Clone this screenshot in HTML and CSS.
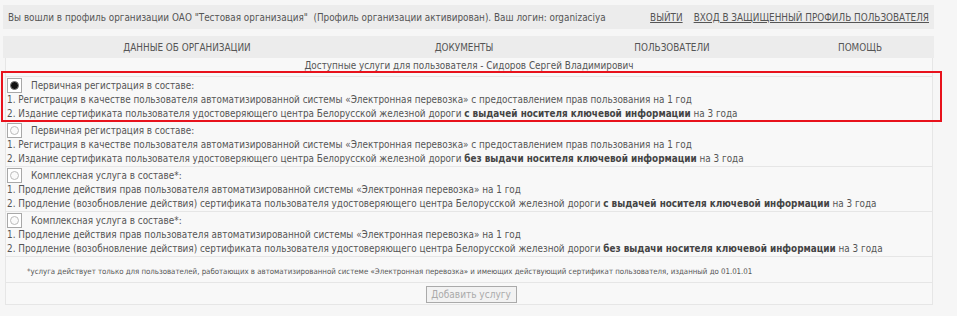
FILE: index.html
```html
<!DOCTYPE html>
<html lang="ru">
<head>
    <meta charset="UTF-8">
    <title>Профиль организации</title>
    <link rel="stylesheet" href="styles.css">
</head>
<body>
    <div class="topbar">
        <span class="login-info">Вы вошли в профиль организации ОАО "Тестовая организация"&nbsp; (Профиль организации активирован). Ваш логин: organizaciya</span>
        <a href="#" class="toplink">ВЫЙТИ</a>
        <a href="#" class="toplink">ВХОД В ЗАЩИЩЕННЫЙ ПРОФИЛЬ ПОЛЬЗОВАТЕЛЯ</a>
    </div>

    <div class="menu">
        <span class="menu-item m1">ДАННЫЕ ОБ ОРГАНИЗАЦИИ</span>
        <span class="menu-item m2">ДОКУМЕНТЫ</span>
        <span class="menu-item m3">ПОЛЬЗОВАТЕЛИ</span>
        <span class="menu-item m4">ПОМОЩЬ</span>
    </div>

    <div class="services">
        <div class="services-title">Доступные услуги для пользователя - Сидоров Сергей Владимирович</div>

        <div class="service">
            <div class="service-head"><span class="radio checked"><i></i></span>Первичная регистрация в составе:</div>
            <div>1. Регистрация в качестве пользователя автоматизированной системы «Электронная перевозка» с предоставлением прав пользования на 1 год</div>
            <div>2. Издание сертификата пользователя удостоверяющего центра Белорусской железной дороги <b>с выдачей носителя ключевой информации</b> на 3 года</div>
        </div>
        <div class="service">
            <div class="service-head"><span class="radio"><i></i></span>Первичная регистрация в составе:</div>
            <div>1. Регистрация в качестве пользователя автоматизированной системы «Электронная перевозка» с предоставлением прав пользования на 1 год</div>
            <div>2. Издание сертификата пользователя удостоверяющего центра Белорусской железной дороги <b>без выдачи носителя ключевой информации</b> на 3 года</div>
        </div>
        <div class="service">
            <div class="service-head"><span class="radio"><i></i></span>Комплексная услуга в составе*:</div>
            <div>1. Продление действия прав пользователя автоматизированной системы «Электронная перевозка» на 1 год</div>
            <div>2. Продление (возобновление действия) сертификата пользователя удостоверяющего центра Белорусской железной дороги <b>с выдачей носителя ключевой информации</b> на 3 года</div>
        </div>
        <div class="service">
            <div class="service-head"><span class="radio"><i></i></span>Комплексная услуга в составе*:</div>
            <div>1. Продление действия прав пользователя автоматизированной системы «Электронная перевозка» на 1 год</div>
            <div>2. Продление (возобновление действия) сертификата пользователя удостоверяющего центра Белорусской железной дороги <b>без выдачи носителя ключевой информации</b> на 3 года</div>
        </div>

        <div class="note">*услуга действует только для пользователей, работающих в автоматизированной системе «Электронная перевозка» и имеющих действующий сертификат пользователя, изданный до 01.01.01</div>

        <div class="actions">
            <button class="add-btn" disabled>Добавить услугу</button>
        </div>
    </div>

    <div class="highlight"></div>
</body>
</html>
```

FILE: styles.css
```css
body {
    margin: 0;
    padding: 5px 0 0 3px;
    background: #f6f6f6;
    font-family: "DejaVu Sans Condensed", "DejaVu Sans", Tahoma, sans-serif;
    font-size: 9.85px;
    color: #555;
    width: 931px;
}

.topbar {
    display: flex;
    align-items: center;
    height: 24px;
    padding: 0 5px;
    background: #ececec;
}

.login-info {
    flex: 1;
}

.toplink {
    color: #555;
    text-decoration: underline;
    margin-left: 11px;
}

.menu {
    display: flex;
    align-items: center;
    height: 22px;
    margin-top: 7px;
    background: #ececec;
}

.menu-item {
    text-align: center;
}

.m1 { width: 368px; }
.m2 { width: 186px; }
.m3 { width: 230px; }
.m4 { width: 146px; }

.services {
    margin: 0 1px 0 2px;
    border: 1px solid #e6e6e6;
    border-top: none;
    background: #f8f8f8;
}

.services-title {
    text-align: center;
    line-height: 13px;
    padding-top: 1px;
    height: 17px;
}

.service {
    padding: 0 1px;
    border-top: 1px solid #e6e6e6;
    line-height: 14px;
}

.service b {
    color: #444;
}

.service-head {
    display: flex;
    align-items: center;
    height: 15px;
    padding-top: 1px;
    line-height: 14px;
}

.radio {
    display: flex;
    align-items: center;
    justify-content: center;
    width: 13px;
    height: 13px;
    margin-right: 9px;
    border: 1px solid #a8a8a8;
    background: #fff;
}

.radio i {
    width: 7px;
    height: 7px;
    border: 1px solid #bbb;
    border-radius: 50%;
    background: #fafafa;
}

.radio.checked i {
    border-color: #777;
    background: #111;
}

.note {
    border-top: 1px solid #e6e6e6;
    padding: 10px 0 5px 21px;
    height: 10px;
    line-height: 10px;
    font-size: 7.8px;
    color: #555;
}

.actions {
    display: flex;
    justify-content: center;
    border-top: 1px solid #e6e6e6;
    padding: 3px 0 1px;
}

.add-btn {
    width: 91px;
    height: 17px;
    padding: 0;
    font-family: inherit;
    font-size: 10px;
    line-height: 15px;
    color: #aaa;
    background: #f2f2f2;
    border: 1px solid #aaa;
    border-radius: 0;
    margin-left: 4px;
}

.highlight {
    position: absolute;
    left: 1px;
    top: 71px;
    width: 937px;
    height: 47px;
    border: 2px solid #e8121c;
}
```
